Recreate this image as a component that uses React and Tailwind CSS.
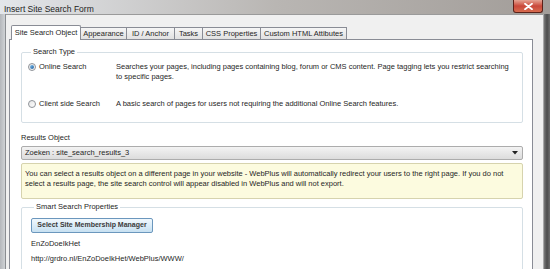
import React from "react";

const FONT = { fontFamily: '"Liberation Sans", Arial, sans-serif' };

const TABS = [
  { label: "Site Search Object", w: "w-[70px]", active: true },
  { label: "Appearance", w: "w-[46px]" },
  { label: "ID / Anchor", w: "w-[48px]" },
  { label: "Tasks", w: "w-[28px]" },
  { label: "CSS Properties", w: "w-[58px]" },
  { label: "Custom HTML Attibutes", w: "w-[86px]" },
];

// ─── Radio ────────────────────────────────────────────────────────────────────
function Radio({ checked }) {
  return (
    <span className="w-[8px] h-[8px] rounded-full border border-[#8f9399] bg-gradient-to-br from-[#e6e6e6] to-[#fdfdfd] flex items-center justify-center shrink-0">
      {checked && (
        <span className="w-[4px] h-[4px] rounded-full bg-gradient-to-br from-[#7fc1f0] to-[#1e5d9c]" />
      )}
    </span>
  );
}

function Group({ title, className = "", children }) {
  return (
    <fieldset
      className={`border border-[#d5dfe5] rounded-[2px] px-[6px] ${className}`}
    >
      <legend className="ml-[3px] px-[2px] leading-[10px] text-[#262626]">
        {title}
      </legend>
      {children}
    </fieldset>
  );
}

export default function App() {
  return (
    <div
      className="w-[550px] h-[269px] overflow-hidden flex flex-col bg-gradient-to-r from-[#e3e6ea] via-[#b9b6b3] to-[#a29d99] text-[7.5px] text-[#262626]"
      style={FONT}
    >
      {/* title bar */}
      <div className="h-[14px] flex items-start justify-between shrink-0">
        <span className="pl-[4px] pt-[3px] text-[8.5px] leading-[12px] text-[#222]">
          Insert Site Search Form
        </span>
        <div className="mr-[7px] w-[30px] h-[13px] rounded-b-[3px] border border-t-0 border-[#5b2119] bg-gradient-to-b from-[#e4a393] via-[#c9473a] to-[#d76b4e] flex items-center justify-center">
          <svg width="9" height="7" viewBox="0 0 9 7">
            <path
              d="M1 0.8 L8 6.2 M8 0.8 L1 6.2"
              stroke="#fff"
              strokeWidth="1.8"
              strokeLinecap="round"
            />
          </svg>
        </div>
      </div>

      <div className="flex-1 flex min-h-0">
        {/* left frame */}
        <div className="w-[6px] shrink-0 bg-gradient-to-r from-[#b4b7bb] to-[#cfd2d5] border-r border-[#8a8d91]" />

        {/* client area */}
        <div className="flex-1 bg-[#f0f0f0] border-t border-[#9a9a9a] pl-[3px] pr-[10px] pt-[10px] flex flex-col min-w-0">
          {/* tabs */}
          <div className="flex items-end h-[14px] pl-[2px] relative z-10">
            {TABS.map((t) =>
              t.active ? (
                <div
                  key={t.label}
                  className={`${t.w} h-[15px] -mb-[1px] bg-white border border-b-0 border-[#898c95] rounded-t-[2px] flex items-center justify-center leading-[10px]`}
                >
                  {t.label}
                </div>
              ) : (
                <div
                  key={t.label}
                  className={`${t.w} h-[12px] bg-gradient-to-b from-[#f6f6f6] to-[#e1e1e1] border border-l-0 border-b-0 border-[#898c95] flex items-center justify-center leading-[10px]`}
                >
                  {t.label}
                </div>
              )
            )}
          </div>

          {/* panel */}
          <div className="flex-1 bg-white border border-[#898c95] pl-[11px] pr-[9px] pt-[7px]">
            <Group title="Search Type" className="pb-[13px]">
              <div className="pt-[5px] flex leading-[9.5px]">
                <div className="w-[88px] flex items-center gap-[3px] h-[10px] shrink-0">
                  <Radio checked />
                  <span>Online Search</span>
                </div>
                <p className="w-[400px]">
                  Searches your pages, including pages containing blog, forum or
                  CMS content. Page tagging lets you restrict searching to
                  specific pages.
                </p>
              </div>
              <div className="mt-[18px] flex leading-[10px]">
                <div className="w-[88px] flex items-center gap-[3px] h-[10px] shrink-0">
                  <Radio />
                  <span>Client side Search</span>
                </div>
                <p>
                  A basic search of pages for users not requiring the additional
                  Online Search features.
                </p>
              </div>
            </Group>

            <div className="mt-[10px] leading-[10px]">Results Object</div>
            <div className="mt-[3px] h-[14px] border border-[#acacac] rounded-[2px] bg-gradient-to-b from-[#f3f3f3] to-[#dcdcdc] flex items-center justify-between pl-[3px] pr-[4px]">
              <span>Zoeken : site_search_results_3</span>
              <svg width="6" height="4" viewBox="0 0 6 4">
                <path d="M0 0 H6 L3 3.5 Z" fill="#222" />
              </svg>
            </div>

            <div className="mt-[3px] h-[36px] border border-[#d6d3ae] rounded-[2px] bg-[#fcfbdf] px-[3px] pt-[5px] leading-[10px]">
              <p>
                You can select a results object on a different page in your
                website - WebPlus will automatically redirect your users to the
                right page. If you do not select a results page, the site search
                control will appear disabled in WebPlus and will not export.
              </p>
            </div>

            <Group title="Smart Search Properties" className="mt-[3px] pl-[9px] pb-[20px]">
              <button className="mt-[6px] w-[122px] h-[15px] border border-[#6b97bd] rounded-[2px] bg-gradient-to-b from-[#f1f8fd] via-[#dcedf8] to-[#c7e0f1] font-bold text-[7px] text-[#3a3a3a] flex items-center justify-center">
                Select Site Membership Manager
              </button>
              <div className="mt-[6px] leading-[10px]">EnZoDoeIkHet</div>
              <div className="mt-[5px] leading-[10px]">
                http://grdro.nl/EnZoDoeIkHet/WebPlus/WWW/
              </div>
            </Group>
          </div>
        </div>

        {/* right frame */}
        <div className="w-[7px] shrink-0 border-l border-[#a8a8a8] bg-gradient-to-r from-[#7a7a7a] via-[#4c4c4c] to-[#6e6e6e]" />
      </div>
    </div>
  );
}
